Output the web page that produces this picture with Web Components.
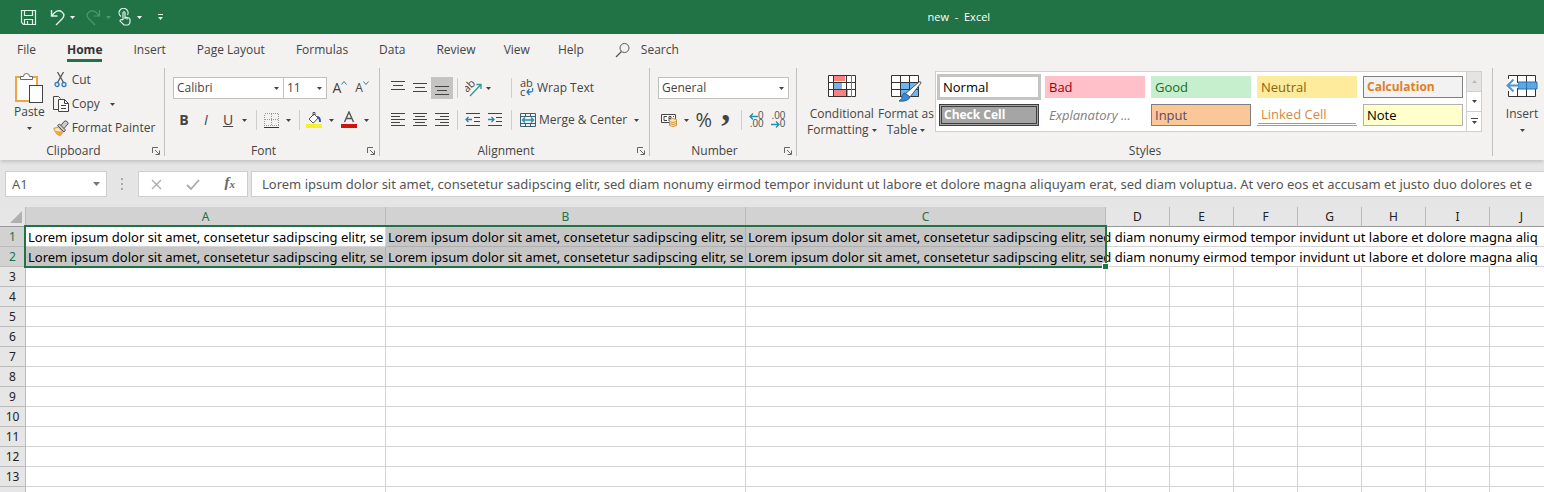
<!DOCTYPE html>
<html lang="en">
<head>
<meta charset="utf-8">
<title>new - Excel</title>
<style>
    body {
        margin: 0;
        height: 100vh;
        overflow: hidden;
        background: #e6e5e6;
        color: #444;
        font-family: "Open Sans", "Noto Sans", sans-serif;
        font-size: 12px;
    }
</style>
</head>
<body>
<excel-app></excel-app>

<script>
const base = `
    *, :host { box-sizing: border-box; }
    button, input, select {
        font: inherit;
        color: inherit;
        background: none;
        border: 0;
        margin: 0;
        padding: 0;
        border-radius: 0;
        outline: 0;
    }
    button { white-space: nowrap; }
    svg { display: block; flex: none; }
`

const define = (name, html, setup) => {
    const template = document.createElement("template")
    template.innerHTML = html
    customElements.define(name, class extends HTMLElement {
        constructor() {
            super()
            this.attachShadow({ mode: "open" })
            this.shadowRoot.appendChild(template.content.cloneNode(true))
        }
        connectedCallback() {
            if (setup) setup(this, this.shadowRoot)
        }
    })
}

const stroke = (d, color = "#444", width = 1) =>
    `<path d="${d}" fill="none" stroke="${color}" stroke-width="${width}"/>`

// each icon: width, height, svg content
const icons = {
    save: [17, 17, stroke("M1.5 1.5h14v14h-12l-2-2zM4.5 1.5v5h8v-5M4.500 15.500v-5h8v5M7.500 12v3.500", "#dff3e6", 1.2)],
    undo: [15, 17, stroke("M1.500 1v6h6M2 6.500C5 2 9 .5 12 3s2 5 0 7l-6 6", "#dff3e6", 1.4)],
    redo: [15, 17, stroke("M13.500 1v6h-6M13 6.500C10 2 6 .5 3 3s-2 5 0 7l6 6", "#4c9a6b", 1.2)],
    touch: [13, 18, stroke("M3 8.500A4.500 4.500 0 1 1 9.500 7M5 12V4.500q1-1.500 2 0V9l4 1q1 .5 1 2v2q0 2-2 3H6l-4-4q0-2 3-1M7 9v2M9 9.500v2", "#dff3e6", 1.2)],
    customize: [5, 7, `<path d="M0 0h5v1H0zM0 3h5L2.500 6z" fill="#dff3e6"/>`],
    arrow: [5, 3, `<path d="M0 0h5L2.500 3z" fill="currentColor"/>`],
    arrowup: [5, 3, `<path d="M0 3h5L2.500 0z" fill="currentColor"/>`],
    arrowbig: [7, 4, `<path d="M0 0h7L3.500 4z" fill="#777"/>`],
    more: [7, 7, `<path d="M0 0h7v1H0zM1 3h5L3.500 6z" fill="currentColor"/>`],
    search: [16, 16, `<circle cx="9.500" cy="6" r="4.500" fill="none" stroke="#555"/>` + stroke("M6.500 9.500L1 15", "#555", 1.2)],
    launcher: [8, 8, stroke("M.5 6V.5H6M3 3l4 4M7.500 3.500v4h-4", "#666")],
    paste: [29, 32, `<rect x="1" y="5" width="21" height="24" fill="#fff" stroke="#efa544" stroke-width="2"/>
        <path d="M5.500 7.500v-3h3q0-3 3-3t3 3h3v3z" fill="#fff" stroke="#666"/>
        <rect x="14.500" y="13.500" width="13" height="17" fill="#fff" stroke="#444"/>`],
    cut: [16, 16, stroke("M4.500 0l6 10.500M10.500 0l-6 10.500", "#555", 1.3) +
        `<circle cx="4" cy="12.500" r="2" fill="none" stroke="#2b7dc0" stroke-width="1.300"/><circle cx="11" cy="12.500" r="2" fill="none" stroke="#2b7dc0" stroke-width="1.300"/>`],
    copy: [16, 16, stroke("M5 13.500H.5V.5h5l2 2") +
        `<path d="M5.500 3.500h6l4 4v8h-10z" fill="#fff" stroke="#444"/>` + stroke("M11.500 3.500v4h4M8 9.500h5M8 12.500h5")],
    painter: [16, 16, `<path d="M1 8.500l4-1.500 5 5-3 3.500q-4-1-6-7z" fill="#fff0d8" stroke="#efa544" stroke-width="1.400"/>
        <path d="M3 11.500l6 .5-2 3z" fill="#efa544" stroke="#efa544"/>
        <path d="M4.500 5.500l2-1.500 6 6-1.500 2zM8 5.500l3-4q2-1.500 3.500.5T14 5l-3 3.500" fill="#ccc" stroke="#555"/>`],
    caretup: [6, 4, stroke("M.5 3.500l2.500-3 2.500 3", "#3c8090")],
    caretdown: [6, 4, stroke("M.5 .5l2.500 3 2.500-3", "#3c8090")],
    borders: [17, 17, `<path d="M1.500 1.500h14v12h-14zM8.500 1.500v12M1.500 7.500h14" fill="none" stroke="#999" stroke-dasharray="1 1" shape-rendering="crispEdges"/>
        <path d="M1 15.500h15" stroke="#333"/>`],
    fill: [18, 18, `<path d="M1 13h16v4H1z" fill="#f4f126"/>
        <path d="M4 8l5-5 4 4-4.500 5H8z" fill="#fff" stroke="#555"/>` + stroke("M8 5V1.500h2V4", "#555") + stroke("M12 6q3 0 3 5", "#2b4fa0", 2)],
    color: [17, 18, stroke("M3.500 11L8 1l4.500 10M5 7.500h6", "#555", 1.4) + `<path d="M0 13h16v4H0z" fill="#d0140c"/>`],
    top: [16, 16, stroke("M1 1.500h14M3 5.500h10M1 9.500h14")],
    middle: [16, 16, stroke("M1 3.500h14M3 7.500h10M1 11.500h14")],
    bottom: [16, 16, stroke("M1 6.500h14M3 10.500h10M1 14.500h14")],
    left: [16, 16, stroke("M1 1.500h14M1 4.500h9M1 7.500h14M1 10.500h9M1 13.500h14")],
    center: [16, 16, stroke("M1 1.500h14M3 4.500h10M1 7.500h14M3 10.500h10M1 13.500h14")],
    right: [16, 16, stroke("M1 1.500h14M6 4.500h9M1 7.500h14M6 10.500h9M1 13.500h14")],
    outdent: [16, 16, stroke("M1 1.500h14M9 5.500h6M9 9.500h6M1 13.500h14") + stroke("M7 7.500H1M3.500 5L1 7.500 3.500 10", "#2489a8", 1.3)],
    indent: [16, 16, stroke("M1 1.500h14M9 5.500h6M9 9.500h6M1 13.500h14") + stroke("M1 7.500h6M4.500 5L7 7.500 4.500 10", "#2489a8", 1.3)],
    orient: [18, 18, `<text x="1" y="12" transform="rotate(-45 4 12)" font-size="11" fill="#444">ab</text>` +
        stroke("M5 17L16 5.500M11.500 5.500H16V10", "#2c9a91", 1.3)],
    wrap: [14, 18, `<text x="0" y="8" font-size="11" fill="#444">ab</text><text x="0" y="17" font-size="11" fill="#444">c</text>` +
        stroke("M12.500 9q1 4-2 4H7M9.500 10L7 13l2.500 3", "#2b7dc0", 1.3)],
    merge: [16, 16, stroke("M.5 1.500h15v13H.5zM.5 4.500h15M.5 11.500h15M5.500 1.500v3M10.500 1.500v3M5.500 11.500v3M10.500 11.500v3", "#3c6070") +
        stroke("M2 8h12M5 5.500L2.500 8 5 10.500M11 5.500L13.500 8 11 10.500", "#1f8fb5", 1.3)],
    money: [17, 16, `<path d="M.5 2.500h14v8H.5z" fill="#fff" stroke="#444"/>` + stroke("M6 4.500H3v4h3M8 9V4.500h2v2H8M12 4.500h1") +
        `<path d="M8.500 7.500q3.500-2 7 0v6q-3.500 2-7 0z" fill="#fde7c3" stroke="#d9953a"/>` + stroke("M8.500 9.500q3.500 2 7 0M8.500 11.500q3.500 2 7 0", "#d9953a")],
    decleft: [9, 7, stroke("M9 3.500H1M4 .5l-3 3 3 3", "#1f8fb5", 1.3)],
    decright: [9, 7, stroke("M0 3.500h8M5 .5l3 3-3 3", "#1f8fb5", 1.3)],
    condfmt: [30, 24, `<path d="M1 1h28v22H1z" fill="#fff"/><path d="M7 1h11v6H7zM7 15h14v8H7z" fill="#f8827f"/><path d="M7 8h8v7H7z" fill="#7fb0e4"/>` +
        stroke("M1.500 1.500h27v21h-27zM1.500 8.500h27M1.500 15.500h27M6.500 1v22M19.500 1v22", "#333") + stroke("M24.500 1v22", "#777")],
    fmttable: [32, 28, `<path d="M1 1h28v22H1z" fill="#fff"/><path d="M10 8h19v15H10z" fill="#6db5ee"/>` +
        stroke("M1.500 1.500h27v21h-27zM1.500 8.500h27M1.500 15.500h27M10.500 1v22M19.500 1v22", "#333") +
        `<path d="M15 20L29 8q2-1 2 1L20 23z" fill="#fff" stroke="#555"/><path d="M15 19l5 4q-2 5-11 4 4-2 3-5 1-3 3-3z" fill="#3c8bd0" stroke="#1f5f9c"/>`],
    insert: [32, 24, `<path d="M3 1h26v22H3z" fill="#fff"/>` + stroke("M2.500 5V1.500h27v21h-27V17M11.500 1v22M20.500 1v22", "#333") +
        `<path d="M12 8h19v7H12z" fill="#58a8e8" stroke="#2f6fae"/>` + stroke("M12 11.500H2", "#f3f2f1", 5) +
        stroke("M12 11.500H1.500M7.500 5.500l-6 6 6 6", "#4a9bd4", 2) + stroke("M20.500 8v7", "#2f6fae")],
    cancel: [11, 11, stroke("M1 1l9 9M10 1l-9 9", "#aaa", 1.3)],
    check: [14, 11, stroke("M1 6l4 4 8-9", "#aaa", 1.8)],
    grip: [3, 12, `<path d="M0 0h2v2H0zM0 5h2v2H0zM0 10h2v2H0z" fill="#aaa"/>`],
    corner: [12, 12, `<path d="M12 0v12H0z" fill="#b0b0b0"/>`]
}

define("x-icon", `<style>:host { display: inline-flex; flex: none; } svg { display: block; }</style>`, (el, root) => {
    const [w, h, body] = icons[el.getAttribute("name")]
    root.innerHTML += `<svg width="${w}" height="${h}" viewBox="0 0 ${w} ${h}" aria-hidden="true">${body}</svg>`
})

// small button with slotted icon and text
define("tool-button", `
<style>
    ${base}
    :host { display: flex; }
    button { display: flex; align-items: center; justify-content: center; gap: 3px; flex: 1; line-height: 20px; }
    :host([active]) { background: #c6c4c2; }
    :host([square]) { width: 22px; height: 22px; }
    :host([square]) button { gap: 0; }
    :host([drop]) button { gap: 6px; }
</style>
<button type="button"><slot></slot></button>`, (el, root) => {
    if (el.title) {
        root.querySelector("button").setAttribute("aria-label", el.title)
    }
})

define("big-button", `
<style>
    ${base}
    :host { display: flex; }
    button { display: flex; flex-direction: column; align-items: center; flex: 1; line-height: 16px; }
    .icon { height: 32px; }
    ::slotted(span) { display: flex; align-items: center; gap: 3px; height: 16px; }
</style>
<button type="button"><span class="icon"><slot name="icon"></slot></span><slot></slot></button>`)

define("drop-box", `
<style>
    ${base}
    :host { display: grid; height: 22px; background: #fff; border: 1px solid #c2c0be; align-items: center; }
    select { grid-area: 1 / 1; appearance: none; width: 100%; height: 20px; padding-left: 3px; line-height: 20px; }
    x-icon { grid-area: 1 / 1; justify-self: end; margin-right: 4px; pointer-events: none; }
</style>
<select></select><x-icon name="arrow"></x-icon>`, (el, root) => {
    const select = root.querySelector("select")
    select.setAttribute("aria-label", el.getAttribute("label"))
    select.add(new Option(el.getAttribute("value")))
})

define("title-bar", `
<style>
    ${base}
    :host { display: flex; align-items: center; height: 34px; padding-left: 20px; background: #217346; color: #fff; }
    .quick { display: flex; align-items: center; width: 146px; }
    button { display: flex; align-items: center; gap: 5px; }
    .undo { margin-left: 13px; }
    .redo { margin-left: 11px; color: #4c9a6b; }
    .touch { margin-left: 7px; gap: 6px; }
    .custom { margin-left: 16px; }
    .before { flex: 11; }
    .after { flex: 8; }
    h1 { margin: 0; font-size: 11px; line-height: 14px; font-weight: 400; white-space: pre; }
</style>
<div class="quick">
    <button aria-label="Save"><x-icon name="save"></x-icon></button>
    <button class="undo" aria-label="Undo"><x-icon name="undo"></x-icon><x-icon name="arrow"></x-icon></button>
    <button class="redo" aria-label="Redo"><x-icon name="redo"></x-icon><x-icon name="arrow"></x-icon></button>
    <button class="touch" aria-label="Touch mode"><x-icon name="touch"></x-icon><x-icon name="arrow"></x-icon></button>
    <button class="custom" aria-label="Customize"><x-icon name="customize"></x-icon></button>
</div>
<div class="before"></div>
<h1>new  -  Excel</h1>
<div class="after"></div>`)

define("ribbon-tabs", `
<style>
    ${base}
    :host { display: flex; height: 32px; padding-left: 17px; background: #f3f2f1; }
    nav { display: flex; gap: 31px; }
    button { height: 32px; line-height: 32px; }
    .active { font-weight: 700; color: #333; height: 28px; border-bottom: 3px solid #217346; }
    .tight { margin-left: -3px; }
    .search { display: flex; align-items: center; gap: 10px; }
</style>
<nav>
    <button>File</button>
    <button class="active">Home</button>
    <button>Insert</button>
    <button>Page Layout</button>
    <button>Formulas</button>
    <button>Data</button>
    <button>Review</button>
    <button class="tight">View</button>
    <button class="tight">Help</button>
    <button class="search"><x-icon name="search"></x-icon>Search</button>
</nav>`)

define("ribbon-group", `
<style>
    ${base}
    :host { display: flex; flex-direction: column; flex: none; padding-top: 2px; position: relative; }
    :host::after { content: ""; position: absolute; right: 0; top: 2px; bottom: 4px; width: 1px; background: #c3c1bf; }
    .body { height: 76px; }
    footer { display: flex; align-items: center; line-height: 18px; text-align: center; }
    footer button { display: flex; width: 13px; }
    .name { flex: 1; }
    :host([launcher]) .name { padding-right: 5px; }
</style>
<div class="body"><slot></slot></div>
<footer><span class="name"></span></footer>`, (el, root) => {
    root.querySelector(".name").textContent = el.getAttribute("name") || ""
    if (el.hasAttribute("launcher")) {
        root.querySelector("footer").insertAdjacentHTML("beforeend",
            `<button aria-label="More ${el.getAttribute("name")} options"><x-icon name="launcher"></x-icon></button>`)
    }
})

define("style-gallery", `
<style>
    ${base}
    :host { display: flex; height: 61px; border: 1px solid #d0cecc; background: #fff; font-size: 13px; }
    .styles { display: grid; grid-template-columns: repeat(5, 100px); grid-auto-rows: 22px; gap: 6px; padding: 4px 3px; }
    .styles button { text-align: left; padding-left: 3px; line-height: 18px; border: 1px solid transparent; }
    .styles .normal { color: #000; outline: 3px solid #c6c4c2; outline-offset: -1px; }
    .styles .bad { background: #ffc0ca; color: #9c0006; }
    .styles .good { background: #c6efce; color: #1c6b1c; }
    .styles .neutral { background: #ffeb9c; color: #8a6210; }
    .styles .calculation { background: #f2f2f2; color: #e08020; border-color: #7f7f7f; font-weight: 700; font-size: 12px; }
    .styles .check { background: #a5a5a5; color: #fff; border: 3px double #3f3f3f; font-weight: 700; font-size: 12px; padding-left: 2px; line-height: 16px; }
    .styles .explanatory { color: #7f7f7f; font-style: italic; }
    .styles .input { background: #fac898; color: #5c4a66; border-color: #7f7f7f; }
    .styles .linked { color: #d28a3c; border-bottom: 3px double #d09a30; line-height: 16px; }
    .styles .note { background: #ffffcc; color: #000; border-color: #b2b2b2; }
    .scroll { display: flex; flex-direction: column; width: 15px; border-left: 1px solid #d0cecc; }
    .scroll button { flex: 1; display: flex; align-items: center; justify-content: center; }
    .scroll button + button { border-top: 1px solid #d0cecc; }
    .scroll button:first-child { background: #e6e4e2; color: #bbb; }
</style>
<div class="styles">
    <button class="normal">Normal</button>
    <button class="bad">Bad</button>
    <button class="good">Good</button>
    <button class="neutral">Neutral</button>
    <button class="calculation">Calculation</button>
    <button class="check">Check Cell</button>
    <button class="explanatory">Explanatory ...</button>
    <button class="input">Input</button>
    <button class="linked">Linked Cell</button>
    <button class="note">Note</button>
</div>
<div class="scroll">
    <button aria-label="Row up"><x-icon name="arrowup"></x-icon></button>
    <button aria-label="Row down"><x-icon name="arrow"></x-icon></button>
    <button aria-label="More styles"><x-icon name="more"></x-icon></button>
</div>`)

define("ribbon-bar", `
<style>
    ${base}
    :host { display: flex; height: 94px; background: #f3f2f1; box-shadow: 0 3px 3px -1px #c4c2c2; position: relative; }
    .row { display: flex; align-items: center; height: 22px; }
    .row + .row { margin-top: 10px; }
    .rows { padding-top: 9px; }
    .line { width: 1px; height: 20px; background: #d0cecc; }
    .clipboard { width: 165px; }
    .clipboard div { display: flex; }
    .clipboard .list { flex-direction: column; align-items: flex-start; margin-left: 8px; }
    .list tool-button { height: 24px; }
    .paste { margin: 4px 0 0 14px; }
    .font { width: 215px; }
    .font .rows { padding-left: 8px; }
    .font drop-box:first-child { width: 111px; }
    .font drop-box + drop-box { width: 44px; margin-left: -1px; }
    .alignment { width: 270px; }
    .alignment .rows { padding-left: 7px; }
    .alignment .wide { margin-left: 8px; }
    .number { width: 147px; }
    .number .rows { padding: 9px 8px 0; }
    .styles { width: 696px; }
    .styles .content { display: flex; padding-top: 3px; }
    .styles big-button { margin-top: 3px; }
    .cond { width: 68px; margin-left: 10px; }
    .table { width: 54px; margin: 0 3px; }
    .glyph { font-size: 14px; }
    .caret { align-self: flex-start; margin-top: 4px; }
    .pct { font-size: 20px; }
    .comma { font: 700 36px/8px "Liberation Serif", serif; height: 32px; }
    .dec { display: grid; font: 10px/8px "Liberation Sans", sans-serif; color: #555; justify-items: end; }
    .dec span { display: flex; align-items: center; }
    .cells { width: 120px; }
    .cells big-button { width: 58px; margin-top: 6px; }
</style>
<ribbon-group class="clipboard" name="Clipboard" launcher>
    <div>
        <big-button class="paste"><x-icon slot="icon" name="paste"></x-icon><span>Paste</span><span><x-icon name="arrow"></x-icon></span></big-button>
        <div class="list">
            <tool-button><x-icon name="cut"></x-icon>Cut</tool-button>
            <tool-button><x-icon name="copy"></x-icon>Copy<x-icon name="arrow" style="margin-left: 7px"></x-icon></tool-button>
            <tool-button><x-icon name="painter"></x-icon>Format Painter</tool-button>
        </div>
    </div>
</ribbon-group>
<ribbon-group class="font" name="Font" launcher>
    <div class="rows">
        <div class="row">
            <drop-box label="Font" value="Calibri"></drop-box>
            <drop-box label="Font size" value="11"></drop-box>
            <tool-button square title="Increase font size" style="margin-left: 2px"><span class="glyph">A</span><x-icon class="caret" name="caretup"></x-icon></tool-button>
            <tool-button square title="Decrease font size"><span>A</span><x-icon class="caret" name="caretdown"></x-icon></tool-button>
        </div>
        <div class="row">
            <tool-button square><b class="glyph">B</b></tool-button>
            <tool-button square><i class="glyph">I</i></tool-button>
            <tool-button square><u class="glyph">U</u></tool-button>
            <tool-button title="Underline style"><x-icon name="arrow" style="margin: 0 9px 0 3px"></x-icon></tool-button>
            <span class="line"></span>
            <tool-button drop title="Borders" style="margin: 0 8px 0 6px"><x-icon name="borders"></x-icon><x-icon name="arrow"></x-icon></tool-button>
            <span class="line"></span>
            <tool-button drop title="Fill color" style="margin: 0 7px 0 5px"><x-icon name="fill"></x-icon><x-icon name="arrow"></x-icon></tool-button>
            <tool-button drop title="Font color"><x-icon name="color"></x-icon><x-icon name="arrow"></x-icon></tool-button>
        </div>
    </div>
</ribbon-group>
<ribbon-group class="alignment" name="Alignment" launcher>
    <div class="rows">
        <div class="row">
            <tool-button square title="Top align"><x-icon name="top"></x-icon></tool-button>
            <tool-button square title="Middle align"><x-icon name="middle"></x-icon></tool-button>
            <tool-button square active title="Bottom align"><x-icon name="bottom"></x-icon></tool-button>
            <span class="line" style="margin: 0 7px 0 4px"></span>
            <tool-button title="Orientation"><x-icon name="orient"></x-icon><x-icon name="arrow"></x-icon></tool-button>
            <span class="line" style="margin-left: 20px"></span>
            <tool-button class="wide"><x-icon name="wrap"></x-icon>Wrap Text</tool-button>
        </div>
        <div class="row">
            <tool-button square title="Align left"><x-icon name="left"></x-icon></tool-button>
            <tool-button square title="Center"><x-icon name="center"></x-icon></tool-button>
            <tool-button square title="Align right"><x-icon name="right"></x-icon></tool-button>
            <span class="line" style="margin: 0 4px"></span>
            <tool-button square title="Decrease indent"><x-icon name="outdent"></x-icon></tool-button>
            <tool-button square title="Increase indent"><x-icon name="indent"></x-icon></tool-button>
            <span class="line" style="margin-left: 5px"></span>
            <tool-button class="wide"><x-icon name="merge"></x-icon>Merge &amp; Center<x-icon name="arrow" style="margin-left: 4px"></x-icon></tool-button>
        </div>
    </div>
</ribbon-group>
<ribbon-group class="number" name="Number" launcher>
    <div class="rows">
        <drop-box label="Number format" value="General"></drop-box>
        <div class="row" style="margin-top: 10px">
            <tool-button drop title="Accounting format" style="margin: 0 4px 0 3px"><x-icon name="money"></x-icon><x-icon name="arrow"></x-icon></tool-button>
            <tool-button square><span class="pct">%</span></tool-button>
            <tool-button square><span class="comma">,</span></tool-button>
            <span class="line" style="margin: 0 4px"></span>
            <tool-button square title="Increase decimal"><span class="dec"><span><x-icon name="decleft"></x-icon>0</span><span>.00</span></span></tool-button>
            <tool-button square title="Decrease decimal"><span class="dec"><span>.00</span><span><x-icon name="decright"></x-icon>0</span></span></tool-button>
        </div>
    </div>
</ribbon-group>
<ribbon-group class="styles" name="Styles">
    <div class="content">
        <big-button class="cond"><x-icon slot="icon" name="condfmt"></x-icon><span>Conditional</span><span>Formatting <x-icon name="arrow"></x-icon></span></big-button>
        <big-button class="table"><x-icon slot="icon" name="fmttable"></x-icon><span>Format as</span><span>Table <x-icon name="arrow"></x-icon></span></big-button>
        <style-gallery></style-gallery>
    </div>
</ribbon-group>
<ribbon-group class="cells">
    <big-button><x-icon slot="icon" name="insert"></x-icon><span>Insert</span><span><x-icon name="arrow"></x-icon></span></big-button>
</ribbon-group>`)

define("formula-bar", `
<style>
    ${base}
    :host { display: flex; align-items: center; height: 47px; padding: 1px 0 0 5px; }
    .box { display: flex; align-items: center; height: 26px; background: #fff; border: 1px solid #cfcdcd; }
    .name { width: 102px; padding: 0 6px; }
    .name input { flex: 1; min-width: 0; color: #555; font-size: 13px; }
    .grip { display: flex; align-items: center; margin: 0 14px; }
    .actions { width: 110px; justify-content: space-around; margin-right: 3px; }
    .actions button { display: flex; }
    .fx { font: italic 700 15px/20px "Liberation Serif", serif; color: #666; }
    .fx sub { font-size: 11px; line-height: 24px; }
    .value { flex: 1; padding-left: 10px; border-right: 0; }
    .value input { flex: 1; font-family: "Noto Sans", sans-serif; font-size: 13px; color: #555; }
</style>
<div class="box name"><input aria-label="Name box" value="A1"><x-icon name="arrowbig"></x-icon></div>
<span class="grip"><x-icon name="grip"></x-icon></span>
<div class="box actions">
    <button aria-label="Cancel"><x-icon name="cancel"></x-icon></button>
    <button aria-label="Enter"><x-icon name="check"></x-icon></button>
    <button class="fx" aria-label="Insert function">f<sub>x</sub></button>
</div>
<div class="box value"><input aria-label="Formula" value="Lorem ipsum dolor sit amet, consetetur sadipscing elitr, sed diam nonumy eirmod tempor invidunt ut labore et dolore magna aliquyam erat, sed diam voluptua. At vero eos et accusam et justo duo dolores et e"></div>`)

define("sheet-grid", `
<style>
    ${base}
    :host { display: block; position: relative; overflow: hidden; flex: 1; font-family: "Noto Sans", sans-serif; font-size: 13px; color: #000; }
    table { table-layout: fixed; border-collapse: separate; border-spacing: 0; width: 1618px; background: #fff; }
    th, td { padding: 0; height: 20px; line-height: 19px; border: solid #d4d4d4; border-width: 0 1px 1px 0; white-space: nowrap; }
    th { font-weight: 400; font-size: 12px; color: #222; background: #e6e6e6; border-color: #bbb; }
    thead th { border-color: #bbb #bbb #999; }
    th.on { background: #d2d2d2; color: #217346; }
    td { padding: 1px 0 0 2px; line-height: 18px; max-width: 0; text-align: left; }
    td.clip { overflow: hidden; }
    td.selected { background: #c6c6c6; border-color: #b0b0b0; }
    td.spill { border-right-color: transparent; }
    .all x-icon { display: flex; justify-content: flex-end; padding-right: 3px; }
    .selection { position: absolute; left: 24px; top: 18px; width: 1083px; height: 43px; border: 2px solid #217346; pointer-events: none; }
    .selection::after { content: ""; position: absolute; right: -3px; bottom: -3px; width: 5px; height: 5px; background: #217346; outline: 1px solid #fff; }
</style>
<table>
    <thead></thead>
    <tbody></tbody>
</table>
<div class="selection"></div>`, (el, root) => {
    const start = "Lorem ipsum dolor sit amet, consetetur sadipscing elitr, se"
    const long = start + "d diam nonumy eirmod tempor invidunt ut labore et dolore magna aliq"
    const columns = [..."ABCDEFGHIJK"]
    const widths = columns.map((c, i) => i < 3 ? 360 : 64)
    root.querySelector("thead").innerHTML =
        `<tr><th class="all" style="width: 26px"><x-icon name="corner"></x-icon></th>` +
        columns.map((c, i) => `<th scope="col" class="${i < 3 ? "on" : ""}" style="width: ${widths[i]}px">${c}</th>`).join("") + "</tr>"
    const body = root.querySelector("tbody")
    for (let row = 1; row <= 14; row++) {
        const filled = row <= 2
        const cells = columns.map((c, i) => {
            if (!filled) return "<td></td>"
            if (i > 2) return `<td class="spill"></td>`
            const names = [i < 2 ? "clip" : "", row === 1 && i === 0 ? "" : "selected"]
            return `<td class="${names.join(" ")}">${i < 2 ? start : long}</td>`
        })
        body.insertAdjacentHTML("beforeend", `<tr><th scope="row" class="${filled ? "on" : ""}">${row}</th>${cells.join("")}</tr>`)
    }
})

define("excel-app", `
<style>
    :host { display: flex; flex-direction: column; height: 100vh; }
    title-bar, ribbon-tabs, ribbon-bar, formula-bar { flex: none; }
</style>
<title-bar></title-bar>
<ribbon-tabs></ribbon-tabs>
<ribbon-bar></ribbon-bar>
<formula-bar></formula-bar>
<sheet-grid></sheet-grid>`)
</script>
</body>
</html>
